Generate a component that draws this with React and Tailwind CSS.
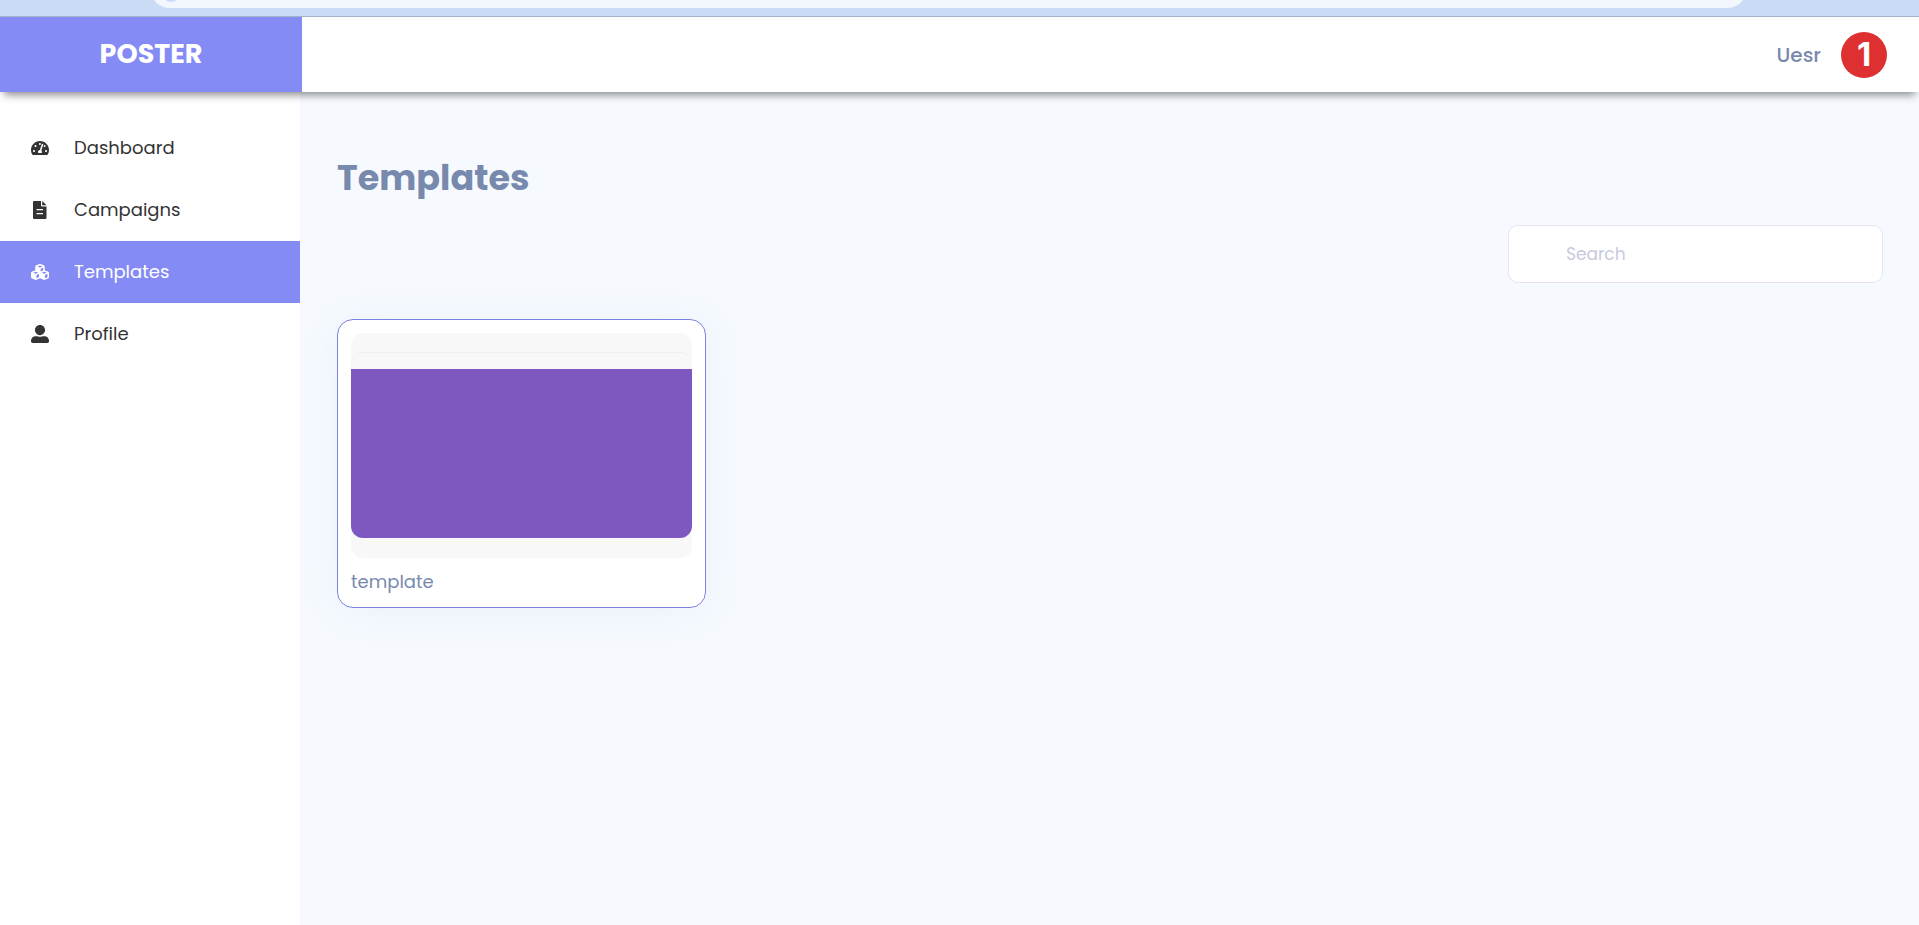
import React, { useState } from "react";
import { FaTachometerAlt, FaUserAlt } from "react-icons/fa";
import { FaCubes } from "react-icons/fa6";

const links = [
  { name: "Dashboard", href: "#dashboard", icon: FaTachometerAlt },
  { name: "Campaigns", href: "#campaigns", icon: FileIcon },
  { name: "Templates", href: "#templates", icon: FaCubes },
  { name: "Profile", href: "#profile", icon: FaUserAlt },
];

const templates = [{ id: 1, name: "template" }];

export default function App() {
  const [active, setActive] = useState("Templates");
  const [search, setSearch] = useState("");

  const shown = templates.filter((t) =>
    t.name.toLowerCase().includes(search.trim().toLowerCase())
  );

  return (
    <div className="flex min-h-screen flex-col bg-[#f6faff] font-[Poppins,Inter,sans-serif]">
      <TopStrip />
      <Header />

      <div className="flex flex-1">
        <Sidebar active={active} onSelect={setActive} />

        <main className="flex-1 pt-14 pr-9 pl-[37px]">
          <h1 className="text-[35px] leading-[60px] font-bold text-[#7889ae]">Templates</h1>

          <div className="mt-[17px] flex justify-end">
            <input
              type="search"
              aria-label="Search"
              placeholder="Search"
              value={search}
              onChange={(e) => setSearch(e.target.value)}
              className="h-[58px] w-[375px] rounded-[10px] border border-[#e6e4f0] bg-white pr-4 pl-[57px] text-[17px] text-[#7889ae] outline-none placeholder:text-[#c8cade] focus:border-[#858bf5]"
            />
          </div>

          <div className="mt-9 flex flex-wrap gap-6">
            {shown.map((t) => (
              <TemplateCard key={t.id} name={t.name} />
            ))}
          </div>
        </main>
      </div>
    </div>
  );
}

/* bottom edge of the browser bar */
function TopStrip() {
  return (
    <div className="h-[17px] overflow-hidden border-b border-[#a3b1c9] bg-[#c9dbf5] pr-[172px] pl-[150px]">
      <div className="-mt-8 flex h-10 items-end rounded-full bg-[#f2f6fd] pb-1.5 pl-3">
        <div className="size-[18px] rounded-full bg-[#c9dbf5]" />
      </div>
    </div>
  );
}

function Header() {
  return (
    <header className="z-10 flex h-[75px] bg-white shadow-[0_7px_8px_-4px_rgba(0,0,0,0.45)]">
      <a
        href="#home"
        className="flex w-[302px] items-center justify-center bg-[#858bf5] text-[27px] font-bold text-white"
      >
        POSTER
      </a>
      <div className="flex flex-1 items-center justify-end gap-5 pr-8">
        <span className="text-xl font-medium text-[#7889ae]">Uesr</span>
        <button
          type="button"
          className="flex size-[46px] items-center justify-center rounded-full bg-[#de2f31] font-[Inter,sans-serif] text-[33px] leading-none font-bold text-white"
        >
          1
        </button>
      </div>
    </header>
  );
}

function Sidebar({ active, onSelect }) {
  return (
    <nav className="w-[300px] bg-white pt-[25px]">
      {links.map(({ name, href, icon: Icon }) => (
        <a
          key={name}
          href={href}
          onClick={() => onSelect(name)}
          className={`flex h-[62px] items-center gap-[25px] pl-[31px] text-lg ${
            active === name ? "bg-[#858bf5] text-white" : "text-[#333]"
          }`}
        >
          <Icon size={18} />
          {name}
        </a>
      ))}
    </nav>
  );
}

function FileIcon({ size }) {
  return (
    <svg width={size} height={size} viewBox="0 0 18 18" fill="currentColor" aria-hidden="true">
      <path
        fillRule="evenodd"
        d="M3 0h7v4.500a1 1 0 0 0 1 1h4.500V17a1 1 0 0 1-1 1H3a1 1 0 0 1-1-1V1a1 1 0 0 1 1-1ZM5.500 8v1.200h6.500V8ZM5.500 12v1.200h6.500V12Z"
      />
      <path d="M11.200 0l4.300 4.300h-4.300Z" />
    </svg>
  );
}

function TemplateCard({ name }) {
  return (
    <article className="w-[369px] rounded-2xl border border-[#7d83dc] bg-white p-[13px] pb-[9px] shadow-[0_4px_40px_rgba(120,137,174,0.08)]">
      {/* preview */}
      <div className="rounded-xl bg-[#f8f8f8] pt-[19px] pb-5">
        <div className="rounded-xl border-t border-[#efefef] pt-4">
          <div className="h-[169px] rounded-b-xl bg-[#7f57c1]" />
        </div>
      </div>
      <p className="mt-2 text-lg leading-8 text-[#7889ae]">{name}</p>
    </article>
  );
}
